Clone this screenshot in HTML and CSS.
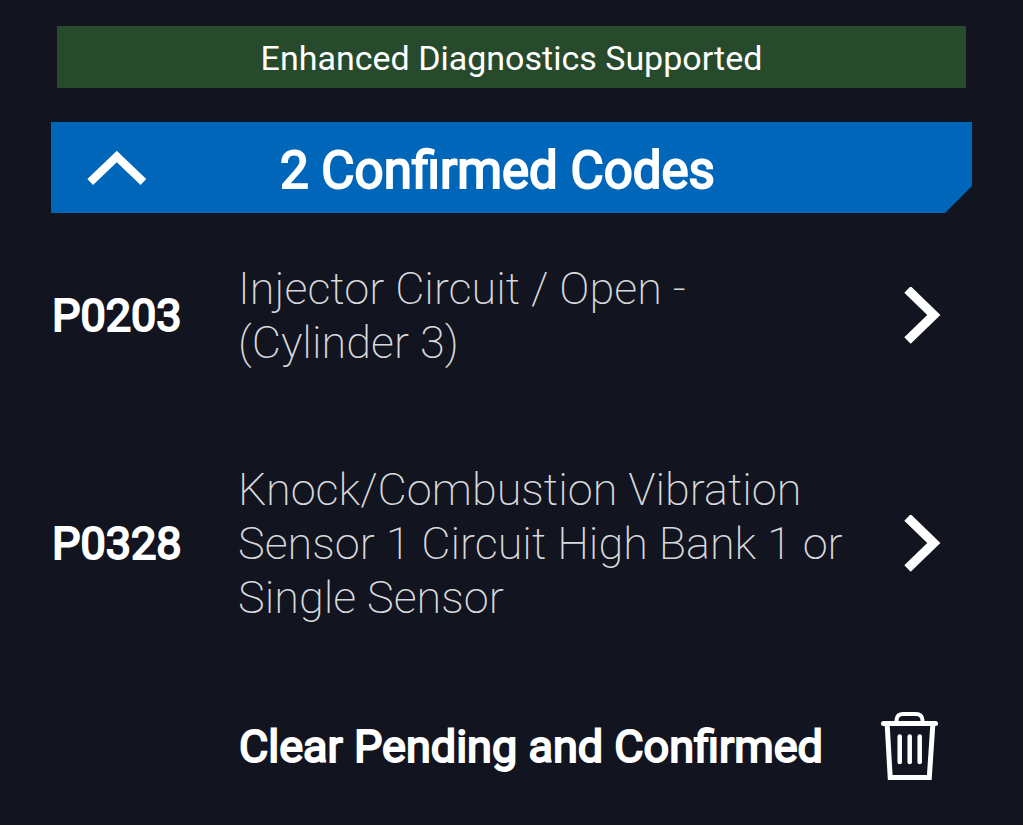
FILE: index.html
```html
<!DOCTYPE html>
<html lang="en">
<head>
<meta charset="utf-8">
<meta name="viewport" content="width=device-width, initial-scale=1">
<title>Diagnostic Codes</title>
<link rel="stylesheet" href="styles.css">
</head>
<body>
<main class="page">
  <p class="notice">Enhanced Diagnostics Supported</p>
  <section class="codes">
    <button class="header" type="button" aria-expanded="true">
      <svg class="caret" viewBox="0 0 60 36" aria-hidden="true"><path d="M3.200 31L29.800 5.500L56.400 31" fill="none" stroke="#fff" stroke-width="8.200"/></svg>
      <span class="header-title">2 Confirmed Codes</span>
    </button>
    <ul class="list">
      <li><a class="row" href="#p0203">
        <span class="code">P0203</span>
        <span class="desc">Injector Circuit / Open - (Cylinder 3)</span>
        <svg class="chevron" viewBox="0 0 38 58" aria-hidden="true"><path d="M3.500 2.500L29.800 28L3.500 53.500" fill="none" stroke="#fff" stroke-width="9.200"/></svg>
      </a></li>
      <li><a class="row" href="#p0328">
        <span class="code">P0328</span>
        <span class="desc">Knock/Combustion Vibration Sensor 1 Circuit High Bank 1 or Single Sensor</span>
        <svg class="chevron" viewBox="0 0 38 58" aria-hidden="true"><path d="M3.500 2.500L29.800 28L3.500 53.500" fill="none" stroke="#fff" stroke-width="9.200"/></svg>
      </a></li>
    </ul>
    <button class="clear" type="button">
      <span class="clear-label">Clear Pending and Confirmed</span>
      <svg class="trash" viewBox="0 0 58 70" aria-hidden="true"><g fill="none" stroke="#fff" stroke-linecap="round"><path d="M2.500 11.500H54.500" stroke-width="5"/><path d="M15.500 10V8Q16 2 22 2H35Q41 2 41.500 8V10" stroke-width="4"/><path d="M6.200 13L9.200 65.500H48.300L51.800 13" stroke-width="5"/><path d="M18.700 24.500V50M28.700 24.500V50M38.700 24.500V50" stroke-width="4.500"/></g></svg>
    </button>
  </section>
</main>
</body>
</html>
```
FILE: styles.css
```css
* { box-sizing: border-box; }
body { margin: 0; background: #12141f; color: #fff; font-family: Roboto, sans-serif; }
.page { padding: 26px 51px 40px; }
.notice { margin: 0 6px 34px; padding: 13px 0 11px; background: #274a2d; text-align: center; font-size: 34px; line-height: 38px; }
.header { display: flex; align-items: center; width: 100%; padding: 19px 36px 12px; border: 0; background: #0066b9; clip-path: polygon(0 0, 100% 0, 100% calc(100% - 27px), calc(100% - 27px) 100%, 0 100%); color: inherit; font-family: inherit; cursor: pointer; }
.caret { width: 60px; height: 36px; flex: none; margin-bottom: 4px; }
.header-title { flex: 1; padding-right: 88px; text-align: center; font-size: 51px; font-weight: 400; line-height: 60px; -webkit-text-stroke: 2px currentColor; }
.list { margin: 0; padding: 49px 0 0; list-style: none; display: grid; gap: 93px; }
.row { display: flex; align-items: center; padding-right: 30px; color: inherit; text-decoration: none; }
.code { flex: none; width: 187px; padding-left: 1px; font-size: 45px; font-weight: 400; line-height: 54px; -webkit-text-stroke: 2px currentColor; }
.desc { flex: 1; padding-right: 48px; color: #d8d9dc; font-size: 45px; font-weight: 200; line-height: 54px; }
.chevron { flex: none; width: 38px; height: 58px; }
.clear { display: flex; align-items: center; justify-content: space-between; width: 100%; margin-top: 87px; padding: 0 33px 0 188px; border: 0; background: none; color: inherit; font-family: inherit; cursor: pointer; }
.clear-label { font-size: 45px; font-weight: 400; line-height: 54px; -webkit-text-stroke: 2px currentColor; }
.trash { flex: none; width: 58px; height: 70px; }
```
